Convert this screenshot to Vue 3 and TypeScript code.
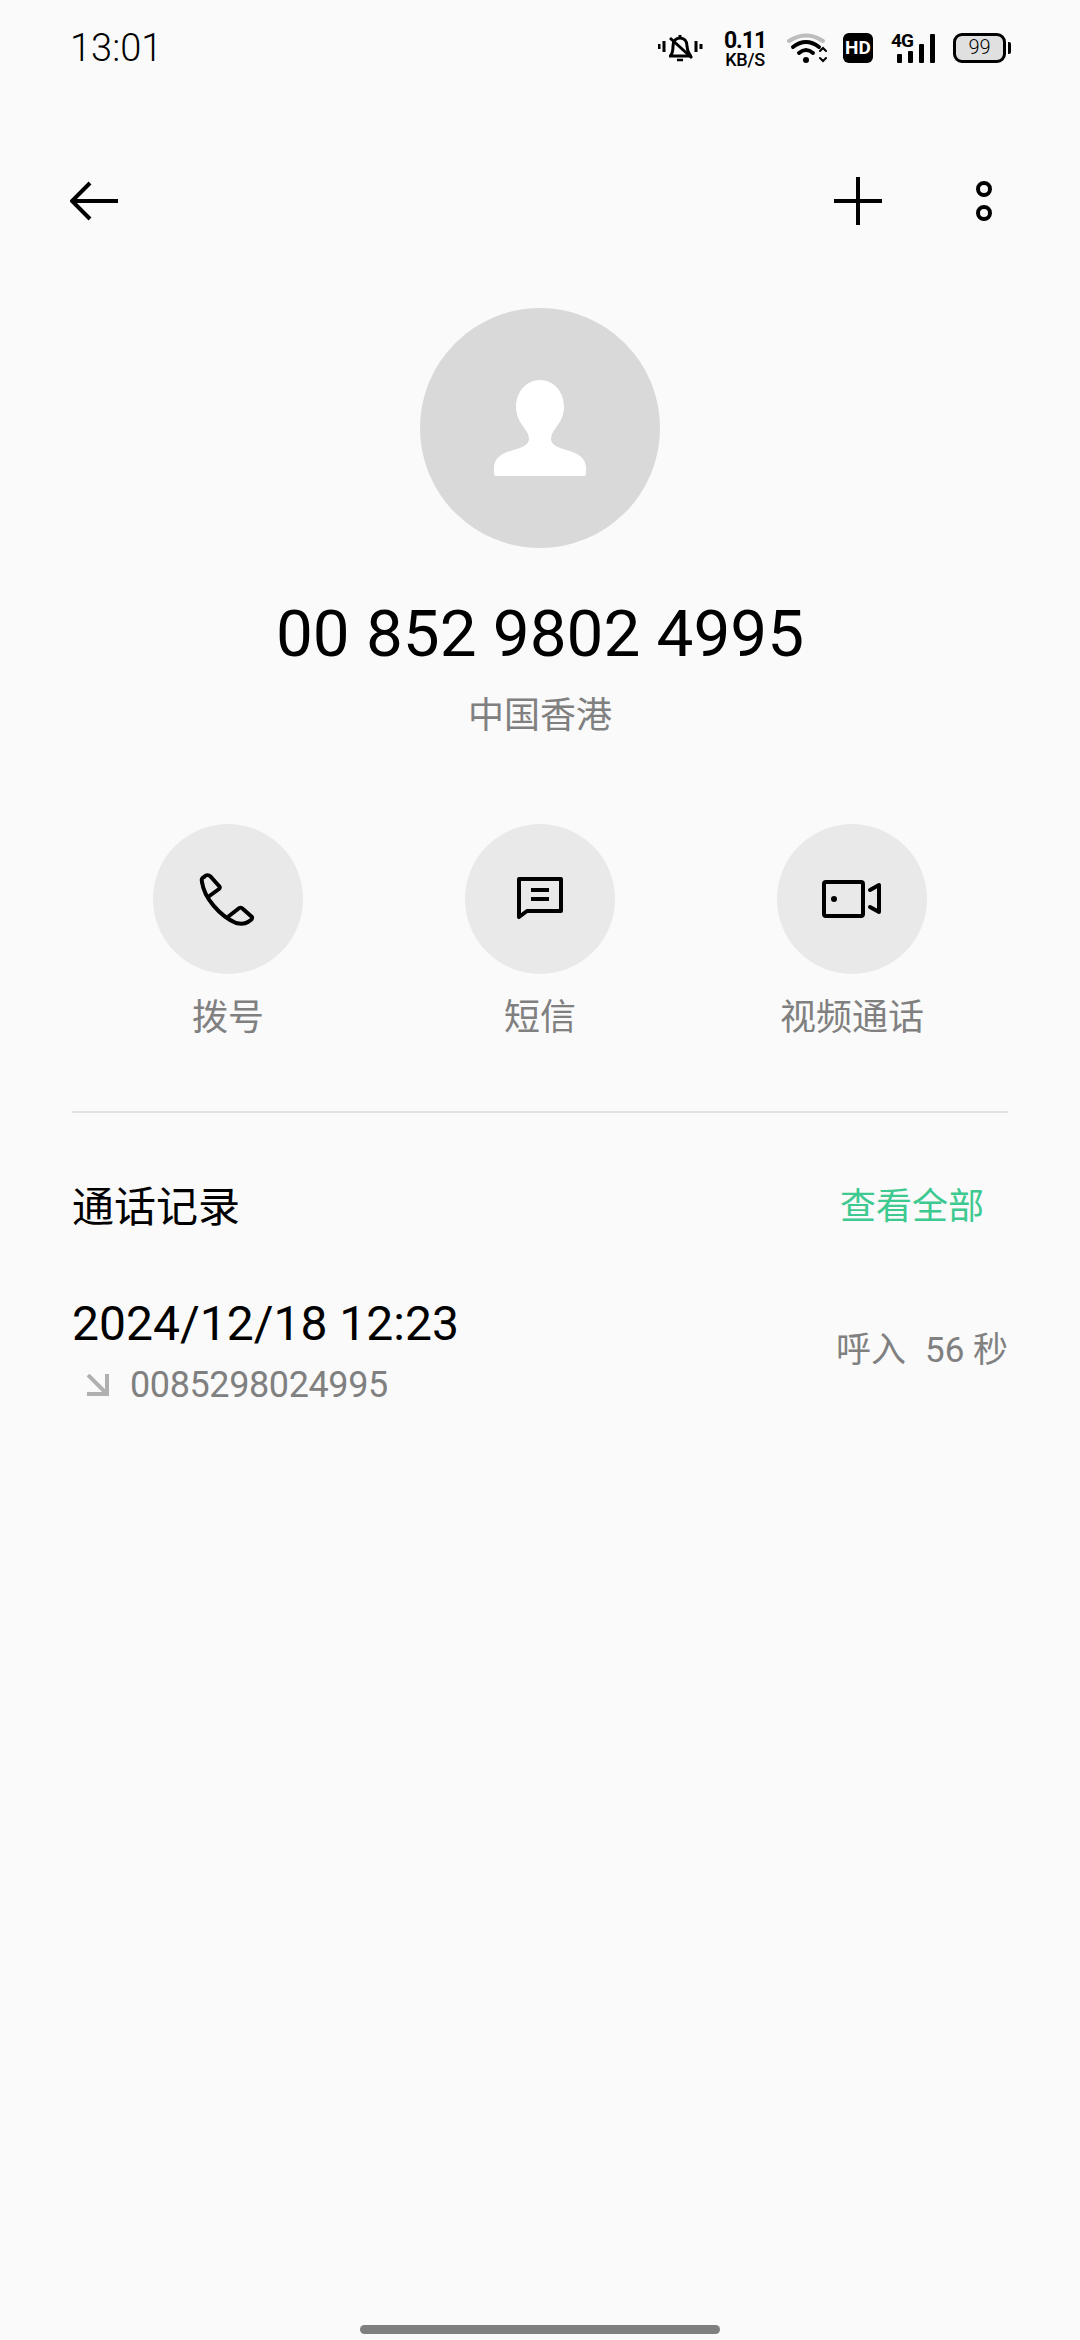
<template>
  <div class="page">
    <div class="status-bar">
      <span class="time">13:01</span>
      <div class="status-icons">
        <svg class="bell" width="45" height="30" viewBox="0 0 45 30" fill="none" stroke="#000" stroke-width="3">
          <path d="M1 11v5M6 8v11M38 8v11M43 11v5" />
          <path d="M22 2v3M11 23h23M13 22c2-3 2-6 2-9 0-5 3-8 7-8s7 3 7 8c0 3 1 6 3 9" stroke-linejoin="round" />
          <path d="M12 5l22 20" />
          <path d="M19 27h6" stroke-width="2.5" />
        </svg>
        <div class="speed">
          <span class="speed-value">0.11</span>
          <span class="speed-unit">KB/S</span>
        </div>
        <svg class="wifi" width="40" height="30" viewBox="0 0 40 30" fill="none" stroke-linecap="round">
          <path d="M2 8Q19 -3 36 8" stroke="#bdbdbd" stroke-width="4" />
          <path d="M6 14Q19 4 32 14" stroke="#000" stroke-width="4" />
          <path d="M12 20Q19 14 26 20" stroke="#000" stroke-width="4" />
          <circle cx="19" cy="27" r="3" fill="#000" />
          <path d="M33 18l3-3 3 3M33 25l3 3 3-3" stroke="#000" stroke-width="2" />
        </svg>
        <div class="hd">HD</div>
        <div class="signal">
          <span class="signal-type">4G</span>
          <div class="signal-bars">
            <i v-for="h in bars" :key="h" :style="{ height: h + 'px' }"></i>
          </div>
        </div>
        <div class="battery">
          <div class="battery-body">99</div>
          <div class="battery-tip"></div>
        </div>
      </div>
    </div>

    <div class="top-bar">
      <svg class="back" width="48" height="40" viewBox="0 0 48 40" fill="none" stroke="#000" stroke-width="4">
        <path d="M2 20H48M20 2L2 20l18 18" />
      </svg>
      <div class="top-actions">
        <svg width="48" height="48" viewBox="0 0 48 48" fill="none" stroke="#000" stroke-width="4">
          <path d="M0 24H48M24 0V48" />
        </svg>
        <svg width="16" height="40" viewBox="0 0 16 40" fill="none" stroke="#000" stroke-width="4">
          <circle cx="8" cy="8" r="6" />
          <circle cx="8" cy="32" r="6" />
        </svg>
      </div>
    </div>

    <div class="contact">
      <div class="avatar">
        <svg width="92" height="96" viewBox="0 0 92 96" fill="#fff">
          <path d="M46 0C59 0 70 11 70 27C70 40 62 46 58 54C56 60 57 64 64 67C72 71 92 72 92 88V94Q92 96 90 96H2Q0 96 0 94V88C0 72 20 71 28 67C35 64 36 60 34 54C30 46 22 40 22 27C22 11 33 0 46 0Z" />
        </svg>
      </div>
      <div class="number">00 852 9802 4995</div>
      <div class="region">中国香港</div>
    </div>

    <div class="actions">
      <div class="action">
        <div class="action-circle">
          <svg width="120" height="100" viewBox="-2 -1 120 100" fill="none" stroke="#000" stroke-width="4" stroke-linejoin="round" stroke-linecap="round">
            <path d="M32 32C34 48 50 66 66 73C70 74 75 74 78 72C81 70 83 69 82 67L73 59C71 57 70 57 68 59L59 66" />
            <path d="M32 32C31 29 32 28 34 27C37 24 39 25 41 27L49 36C50 37 50 38 49 39L38 47" />
          </svg>
        </div>
        <span>拨号</span>
      </div>
      <div class="action">
        <div class="action-circle">
          <svg width="100" height="100" viewBox="0 -1 100 100" fill="none" stroke="#000" stroke-width="4" stroke-linejoin="round">
            <path d="M29 29H71V61H37L29 67Z" />
            <path d="M41 40H59M41 49H59" />
          </svg>
        </div>
        <span>短信</span>
      </div>
      <div class="action">
        <div class="action-circle">
          <svg width="100" height="100" viewBox="2 -1 100 100" fill="none" stroke="#000" stroke-width="4" stroke-linejoin="round" stroke-linecap="round">
            <rect x="24" y="32" width="39" height="34" rx="2" />
            <circle cx="34" cy="49" r="3" fill="#000" stroke="none" />
            <path d="M70 40L79 35V62L70 57" />
          </svg>
        </div>
        <span>视频通话</span>
      </div>
    </div>

    <div class="divider"></div>

    <div class="log-header">
      <span class="log-title">通话记录</span>
      <span class="log-all">查看全部</span>
    </div>

    <div class="log-row">
      <div>
        <div class="log-date">2024/12/18 12:23</div>
        <div class="log-sub">
          <svg width="22" height="22" viewBox="0 0 22 22" fill="none" stroke="#b0b0b0" stroke-width="4">
            <path d="M1 1L19 19M0 20H20V0" />
          </svg>
          <span>0085298024995</span>
        </div>
      </div>
      <div class="log-info"><span>呼入</span><span>56 秒</span></div>
    </div>

    <div class="home-bar"></div>
  </div>
</template>

<script setup lang="ts">
const bars: number[] = [9, 12, 19, 29];
</script>

<style>
html,
body {
  margin: 0;
  background: #fafafa;
}
</style>

<style scoped>
.page {
  width: 1080px;
  height: 2340px;
  box-sizing: border-box;
  display: flex;
  flex-direction: column;
  background: #fafafa;
  padding: 0 72px;
  font-family: Roboto, "Noto Sans CJK SC", sans-serif;
  color: #000;
}

.status-bar {
  height: 96px;
  display: flex;
  justify-content: space-between;
  align-items: center;
}

.time {
  font-size: 38px;
  font-weight: 300;
  margin-left: -2px;
}

.status-icons {
  display: flex;
  align-items: center;
  margin-right: -3px;
}

.speed {
  display: flex;
  flex-direction: column;
  align-items: center;
  margin-left: 22px;
  width: 40px;
  font-weight: 700;
  line-height: 1;
}

.speed-value {
  font-size: 23px;
  line-height: 22px;
  letter-spacing: -1px;
}

.speed-unit {
  font-size: 18px;
  line-height: 15px;
  font-weight: 500;
  letter-spacing: -0.3px;
}

.wifi {
  margin-left: 22px;
}

.hd {
  width: 30px;
  height: 30px;
  margin-left: 16px;
  border-radius: 6px;
  background: #000;
  color: #fff;
  font-size: 19px;
  font-weight: 700;
  line-height: 30px;
  text-align: center;
}

.signal {
  position: relative;
  width: 44px;
  height: 30px;
  margin-left: 18px;
}

.signal-type {
  position: absolute;
  left: 0;
  top: -2px;
  font-size: 19px;
  font-weight: 700;
  line-height: 19px;
  letter-spacing: -1px;
}

.signal-bars {
  position: absolute;
  right: 0;
  bottom: 0;
  display: flex;
  align-items: flex-end;
  gap: 6px;
}

.signal-bars i {
  width: 5px;
  background: #000;
  border-radius: 1px;
}

.battery {
  display: flex;
  align-items: center;
  gap: 2px;
  margin-left: 18px;
}

.battery-body {
  width: 53px;
  height: 30px;
  box-sizing: border-box;
  border: 3.5px solid #000;
  border-radius: 9px;
  background: #e0e0e0;
  font-size: 20px;
  font-weight: 300;
  line-height: 23px;
  text-align: center;
}

.battery-tip {
  width: 3px;
  height: 12px;
  background: #000;
  border-radius: 0 2px 2px 0;
}

.top-bar {
  height: 40px;
  margin-top: 85px;
  display: flex;
  justify-content: space-between;
  align-items: center;
}

.back {
  margin-left: -2px;
}

.top-actions {
  display: flex;
  align-items: center;
  gap: 94px;
  margin-right: 16px;
}

.contact {
  display: flex;
  flex-direction: column;
  align-items: center;
  margin-top: 87px;
}

.avatar {
  width: 240px;
  height: 240px;
  border-radius: 50%;
  background: #d9d9d9;
  display: flex;
  align-items: center;
  justify-content: center;
}

.number {
  margin-top: 48px;
  font-size: 65.6px;
  line-height: 76px;
}

.region {
  margin-top: 20px;
  font-size: 36px;
  line-height: 48px;
  color: #808080;
}

.actions {
  display: grid;
  grid-template-columns: repeat(3, 150px);
  justify-content: space-between;
  margin: 84px 81px 0;
}

.action {
  display: flex;
  flex-direction: column;
  align-items: center;
  font-size: 36px;
  line-height: 48px;
  color: #808080;
  gap: 20px;
}

.action span {
  white-space: nowrap;
}

.action-circle {
  width: 150px;
  height: 150px;
  border-radius: 50%;
  background: #e9e9e9;
  overflow: hidden;
  display: flex;
  align-items: center;
  justify-content: center;
}

.divider {
  height: 2px;
  margin-top: 69px;
  background: #e2e2e2;
}

.log-header {
  display: flex;
  justify-content: space-between;
  align-items: center;
  margin-top: 61px;
  height: 58px;
}

.log-title {
  font-size: 42px;
}

.log-all {
  font-size: 36px;
  color: #3dc98f;
  margin-right: 24px;
}

.log-row {
  display: flex;
  justify-content: space-between;
  align-items: center;
  margin-top: 62px;
}

.log-date {
  font-size: 48px;
  line-height: 60px;
}

.log-sub {
  display: flex;
  align-items: center;
  gap: 21px;
  padding-left: 15px;
  font-size: 36px;
  letter-spacing: -0.4px;
  line-height: 48px;
  color: #808080;
  margin-top: 7px;
}

.log-info {
  display: flex;
  gap: 19px;
  font-size: 35px;
  color: #808080;
  padding-bottom: 10px;
}

.home-bar {
  width: 360px;
  height: 9px;
  border-radius: 5px;
  background: #7f7f7f;
  margin: auto auto 6px;
}
</style>
